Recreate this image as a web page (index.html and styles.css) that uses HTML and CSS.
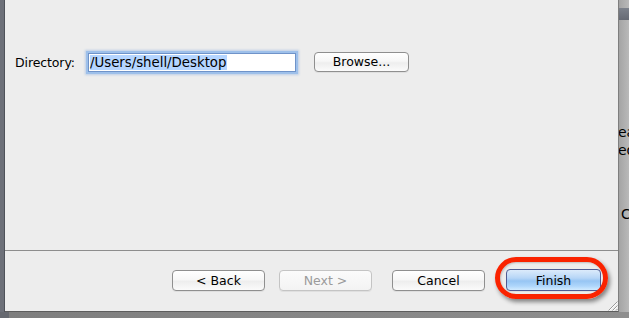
FILE: index.html
```html
<!DOCTYPE html>
<html>
<head>
<meta charset="utf-8">
<link rel="stylesheet" href="styles.css">
</head>
<body>
<div class="screen">
  <div class="edge-left"></div>
  <div class="dialog">
    <div class="content">
      <div class="dir-row">
        <span class="label">Directory:</span>
        <div class="field"><span class="sel">/Users/shell/Desktop</span></div>
        <div class="btn browse">Browse...</div>
      </div>
    </div>
    <div class="footer">
      <div class="btn back">&lt; Back</div>
      <div class="btn next disabled">Next &gt;</div>
      <div class="btn cancel">Cancel</div>
      <div class="finish-wrap">
        <div class="btn finish">Finish</div>
        <div class="ring"></div>
      </div>
      <svg class="grip" width="11" height="11" viewBox="0 0 11 11">
        <path d="M10.5 1.5 L1.5 10.5 M10.5 5.5 L5.5 10.5 M10.5 9 L9 10.5" stroke="#9a9a9a" stroke-width="1" fill="none"/>
        <path d="M10.5 2.5 L2.5 10.5 M10.5 6.5 L6.5 10.5" stroke="#ffffff" stroke-width="1" fill="none"/>
      </svg>
    </div>
  </div>
  <div class="backdrop">
    <div class="bar"></div>
    <div class="txt t1">ea</div>
    <div class="txt t2">ed</div>
    <div class="txt t3">C</div>
  </div>
  <div class="bottom-strip"></div>
</div>
</body>
</html>
```

FILE: styles.css
```css
html, body {
  margin: 0;
  padding: 0;
}
body {
  width: 629px;
  height: 318px;
  overflow: hidden;
  font-family: "DejaVu Sans", "Liberation Sans", sans-serif;
  font-size: 12.5px;
  color: #000;
}
.screen {
  display: grid;
  grid-template-columns: 5px 614px 10px;
  grid-template-rows: 312px 6px;
  width: 629px;
  height: 318px;
}
.edge-left {
  background: #6d7079;
  border-right: 1px solid #4f525a;
  box-sizing: border-box;
}
.dialog {
  position: relative;
  background: #ededed;
  border-right: 1px solid #7e7e7e;
  border-bottom: 1px solid #5c5c5c;
  box-sizing: border-box;
  display: flex;
  flex-direction: column;
}
.content {
  height: 250px;
  flex: none;
}
.dir-row {
  display: flex;
  align-items: center;
  height: 23px;
  margin-top: 51px;
  padding-left: 10px;
}
.label {
  width: 71px;
  flex: none;
  letter-spacing: -0.1px;
}
.field {
  margin-left: 2px;
  width: 208px;
  height: 19px;
  box-sizing: border-box;
  background: #fff;
  border: 1px solid #6f93c9;
  box-shadow: 0 0 0 2px #9ec0ea, 0 0 2px 3px rgba(130,170,225,0.45);
  display: flex;
  align-items: center;
  padding-left: 1px;
  font-size: 13.3px;
}
.sel {
  background: #b5d5ff;
  line-height: 15px;
  padding-right: 1px;
}
.btn {
  box-sizing: border-box;
  height: 21px;
  display: flex;
  align-items: center;
  justify-content: center;
  border: 1px solid #8f8f8f;
  border-radius: 4px;
  background: linear-gradient(#ffffff, #f7f7f7 45%, #eeeeee 55%, #fbfbfb);
  box-shadow: 0 1px 0 rgba(0,0,0,0.06);
  flex: none;
}
.browse {
  width: 95px;
  height: 20px;
  margin-left: 18px;
  margin-top: -2px;
}
.footer {
  position: relative;
  flex: 1;
  border-top: 1px solid #8d8d8d;
  display: flex;
  justify-content: flex-end;
  align-items: flex-start;
  padding-top: 19px;
  padding-right: 17px;
}
.back { width: 93px; }
.next { width: 93px; margin-left: 14px; }
.cancel { width: 93px; margin-left: 20px; }
.disabled {
  color: #9b9b9b;
  border-color: #c4c4c4;
  background: linear-gradient(#fbfbfb, #f3f3f3);
}
.finish-wrap {
  position: relative;
  margin-left: 21px;
}
.finish {
  width: 95px;
  height: 22px;
  margin-top: -1px;
  border-color: #4f5b92;
  background: linear-gradient(#dcebfb, #b7d6f7 40%, #97c5f3 55%, #aed6fb 80%, #d2ebff);
}
.ring {
  position: absolute;
  left: -11px;
  right: -7px;
  top: -13px;
  bottom: -8px;
  border: 5px solid #fa2300;
  border-radius: 22px;
  box-shadow: 2px 3px 4px rgba(0,0,0,0.45), inset 1px 1px 2px rgba(0,0,0,0.2);
}
.grip {
  position: absolute;
  right: 0;
  bottom: 0;
}
.backdrop {
  background: linear-gradient(to right, #a4a4a4, #b9b9b9);
  overflow: hidden;
  display: flex;
  flex-direction: column;
}
.bar {
  margin-top: 8px;
  height: 12px;
  background: linear-gradient(#7c818b, #666a74);
  flex: none;
}
.txt {
  font-size: 14px;
  color: #000;
  margin-left: -1px;
  white-space: nowrap;
  line-height: 16px;
}
.t1 { margin-top: 104px; }
.t2 { margin-top: 2px; }
.t3 { margin-top: 48px; margin-left: 2px; }
.bottom-strip {
  grid-column: 1 / 4;
  background: linear-gradient(to right, #666970 9px, #7e7e7e 9px, #8e8e8e);
}
```
